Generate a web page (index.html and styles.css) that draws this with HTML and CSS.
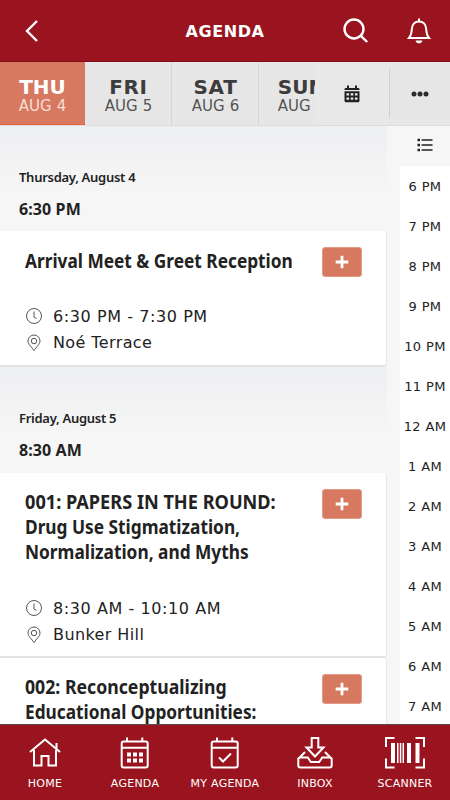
FILE: index.html
```html
<!DOCTYPE html>
<html lang="en">
<head>
<meta charset="utf-8">
<title>Agenda</title>
<link rel="stylesheet" href="styles.css">
</head>
<body>
<div class="app">
  <header class="topbar">
    <svg class="back" width="20" height="26" viewBox="0 0 20 26"><path d="M16 3 6 13l10 10"/></svg>
    <h1>AGENDA</h1>
    <svg class="search" width="28" height="28" viewBox="0 0 28 28"><circle cx="12" cy="12" r="9.500"/><path d="m18.800 18.800 6.400 6.200"/></svg>
    <svg class="bell" width="26" height="28" viewBox="0 0 26 28"><path d="M13 1.500v3M3 21h20c-2.600-3-2.600-5-2.800-9C20 7.300 17 4.500 13 4.500S6 7.300 5.800 12c-.2 4-.2 6-2.800 9z"/><path class="solid" d="M9.500 23.500h7c-.7 2.100-1.700 2.800-3.500 2.800s-2.800-.7-3.500-2.800z"/></svg>
  </header>
  <nav class="daybar">
    <div class="days">
      <div class="day active"><b>THU</b><span>AUG 4</span></div>
      <div class="day"><b class="wide">FRI</b><span>AUG 5</span></div>
      <div class="day"><b class="wide">SAT</b><span>AUG 6</span></div>
      <div class="day last"><b>SUN</b><span>AUG 7</span></div>
    </div>
    <div class="pick"><svg width="16" height="18" viewBox="0 0 16 18"><path d="M.5 5V4.200Q.5 3 1.700 3H3V.5h2V3h6V.5h2V3h1.300q1.200 0 1.200 1.200V5zM.5 6.300h15v9.500q0 1.500-1.500 1.500H2Q.5 17.300.5 15.800z"/><path class="holes" d="M2.500 8.300h2.600v2.300H2.500zm4.200 0h2.600v2.300H6.700zm4.200 0h2.600v2.300h-2.600zM2.500 12.500h2.600v2.300H2.500zm4.200 0h2.600v2.300H6.700zm4.200 0h2.600v2.300h-2.600z"/></svg></div>
    <div class="more"><svg width="18" height="6" viewBox="0 0 18 6"><circle cx="3" cy="3" r="2.500"/><circle cx="9" cy="3" r="2.500"/><circle cx="15" cy="3" r="2.500"/></svg></div>
  </nav>
  <div class="body">
    <main class="list">
      <section>
        <div class="when"><p class="date">Thursday, August 4</p><p class="hour">6:30 PM</p></div>
        <article class="card first">
          <div class="head"><h2><span>Arrival Meet &amp; Greet Reception</span></h2><button class="add"><svg width="14" height="14" viewBox="0 0 14 14"><path d="M7 .7v12.600M.7 7h12.600"/></svg></button></div>
          <div class="info"><svg width="18" height="18" viewBox="0 0 18 18"><circle cx="9" cy="9" r="7.500"/><path d="M9 4.500V10l2.500 1.500"/></svg><span>6:30 PM - 7:30 PM</span></div>
          <div class="info"><svg width="18" height="18" viewBox="0 0 18 18"><path d="M9 16.700C7 13 3 10.500 3 7a6 6 0 0 1 12 0c0 3.500-4 6-6 9.700z"/><circle cx="9" cy="7" r="2.700"/></svg><span class="place">Noé Terrace</span></div>
        </article>
      </section>
      <section>
        <div class="when second"><p class="date">Friday, August 5</p><p class="hour">8:30 AM</p></div>
        <article class="card tall">
          <div class="head"><h2><span class="caps">001: PAPERS IN THE ROUND:</span><span>Drug Use Stigmatization,</span><span>Normalization, and Myths</span></h2><button class="add"><svg width="14" height="14" viewBox="0 0 14 14"><path d="M7 .7v12.600M.7 7h12.600"/></svg></button></div>
          <div class="info"><svg width="18" height="18" viewBox="0 0 18 18"><circle cx="9" cy="9" r="7.500"/><path d="M9 4.500V10l2.500 1.500"/></svg><span>8:30 AM - 10:10 AM</span></div>
          <div class="info"><svg width="18" height="18" viewBox="0 0 18 18"><path d="M9 16.700C7 13 3 10.500 3 7a6 6 0 0 1 12 0c0 3.500-4 6-6 9.700z"/><circle cx="9" cy="7" r="2.700"/></svg><span class="place">Bunker Hill</span></div>
        </article>
        <article class="card tall">
          <div class="head"><h2><span class="semi">002: Reconceptualizing</span><span>Educational Opportunities:</span></h2><button class="add"><svg width="14" height="14" viewBox="0 0 14 14"><path d="M7 .7v12.600M.7 7h12.600"/></svg></button></div>
        </article>
      </section>
    </main>
    <aside class="rail">
      <div class="railtop"><svg width="16" height="14" viewBox="0 0 16 14"><path d="M4.500 2H15.500M4.500 7H15.500M4.500 12H15.500"/><path class="dots" d="M.5 2H3M.5 7H3M.5 12H3"/></svg></div>
      <div class="hours">
        <span>6 PM</span><span>7 PM</span><span>8 PM</span><span>9 PM</span><span>10 PM</span><span>11 PM</span><span>12 AM</span><span>1 AM</span><span>2 AM</span><span>3 AM</span><span>4 AM</span><span>5 AM</span><span>6 AM</span><span>7 AM</span>
      </div>
    </aside>
  </div>
  <footer class="tabs">
    <div class="tab"><svg width="42" height="34" viewBox="0 0 42 34"><path d="m6 16 15-12.500L36 16M10 14v15.500h7.500V20h7v9.500H32V14M32.500 13V7"/></svg><span>HOME</span></div>
    <div class="tab"><svg width="42" height="34" viewBox="0 0 42 34"><rect x="7.700" y="5.500" width="26" height="26" rx="2"/><path d="M7.700 11.700h26M13 1.500v4M28.300 1.500v4"/><path class="grid" d="M13 16.500h4v4h-4zm6 0h4v4h-4zm6 0h4v4h-4zm-12 6h4v4h-4zm6 0h4v4h-4zm6 0h4v4h-4z"/></svg><span>AGENDA</span></div>
    <div class="tab"><svg width="42" height="34" viewBox="0 0 42 34"><rect x="7.700" y="5.500" width="26" height="26" rx="2"/><path d="M7.700 11.700h26M13 1.500v4M28.300 1.500v4"/><path d="m15 21.500 4 4 8-8"/></svg><span>MY AGENDA</span></div>
    <div class="tab"><svg width="42" height="34" viewBox="0 0 42 34"><path d="M17.700 2h6.600v9.500h5.200L21 20.500l-8.500-9h5.200zM11 16l-6.700 7v6.500q0 2 2 2h29.400q2 0 2-2V23L31 16M4.300 23q0-1.500 2-1.500h7.500l3 4.500h8.400l3-4.500h7.500q2 0 2 1.500"/></svg><span>INBOX</span></div>
    <div class="tab"><svg width="42" height="34" viewBox="0 0 42 34"><path d="M10.500 2H2v9M31.500 2H40v9M2 22.500v9h8.500M40 22.500v9h-8.500"/><path class="grid" d="M7 7h4v20H7zm6 0h1.500v20H13zm2.800 0h1.500v20h-1.500zm2.700 0h1.500v20h-1.500zM23 7h4v20h-4zm8.500 0h4v20h-4z"/></svg><span>SCANNER</span></div>
  </footer>
</div>
</body>
</html>
```
FILE: styles.css
```css
* { box-sizing: border-box; }
body { margin: 0; font-family: "DejaVu Sans", Verdana, sans-serif; color: #222; }
p, h1, h2 { margin: 0; }
svg { display: block; flex: none; fill: none; }
.app { width: 450px; height: 800px; display: flex; flex-direction: column; overflow: hidden; background: #f6f6f6; }
.topbar { height: 62px; flex: none; display: grid; grid-template-columns: 150px 150px 88px 62px; align-items: center; background: #99141e; border-bottom: 1px solid #850f18; color: #fff; }
.topbar svg { stroke: #fff; stroke-width: 2.400; }
.back { margin-left: 21px; }
.search { margin-left: 42px; }
.bell { margin-left: 18px; }
.topbar .bell { stroke-width: 2; }
.topbar .solid { fill: #fff; stroke: none; }
h1 { font-size: 16px; line-height: 20px; text-align: center; letter-spacing: .6px; padding-top: 3px; }
.daybar { height: 64px; flex: none; display: flex; background: #e6e6e6; border-bottom: 1px solid #dcdddd; }
.days { width: 315px; flex: none; display: flex; overflow: hidden; }
.day { width: 87px; flex: none; border-right: 1px solid #d6d6d6; display: flex; flex-direction: column; align-items: center; padding: 13px 0 0 1px; color: #3c3c3c; }
.day.active { width: 85px; padding-left: 0; background: #d77860; color: #fff; border: 0; border-bottom: 1px solid #e16330; }
.day.last { padding-left: 0; width: 86px; }
.day b { font-size: 20px; line-height: 24px; }
.day .wide { letter-spacing: .6px; }
.day span { font-size: 15px; line-height: 18px; margin-top: -2px; letter-spacing: .1px; color: #555; white-space: nowrap; }
.day.active span { color: #f9dcd3; }
.pick { width: 74px; display: flex; align-items: center; justify-content: center; background: #e8e8e8; }
.pick svg { fill: #222; }
.pick .holes { fill: #e8e8e8; }
.more { flex: 1; display: flex; align-items: center; justify-content: center; margin: 7px 0; border-left: 1px solid #d2d2d2; }
.more svg { fill: #2c2c2c; }
.body { height: 598px; flex: none; display: flex; overflow: hidden; }
.list { width: 387px; flex: none; height: 598px; overflow: hidden; }
.when { height: 105px; padding: 42px 19px 0; background: linear-gradient(#eeeff1, #f6f6f6 65%); font-family: "Noto Sans", sans-serif; font-weight: 600; }
.when.second { height: 106px; }
.date { font-size: 13px; line-height: 18px; letter-spacing: -.28px; }
.hour { font-size: 16px; line-height: 20px; margin-top: 13px; font-weight: 700; letter-spacing: .1px; }
.card { width: 387px; background: #fff; border-right: 1px solid #e6e6e6; border-bottom: 2px solid #e2e3e4; border-radius: 0 3px 4px 0; padding: 16px 24px 0 25px; }
.card.first { height: 136px; }
.card.tall { height: 185px; }
.head { display: flex; justify-content: space-between; height: 56px; }
.tall .head { height: 106px; }
h2 { flex: 1; min-width: 0; padding-top: 1px; font-family: "Noto Sans", sans-serif; font-weight: 700; font-size: 20px; line-height: 25px; white-space: nowrap; }
.tall h2 { padding-top: 0; }
h2 span { display: block; width: max-content; transform: scaleX(.864); transform-origin: left; }
h2 .caps { transform: scaleX(.907); }
h2 .semi { transform: scaleX(.884); }
.add { width: 40px; height: 30px; margin-left: -60px; flex: none; padding: 0; border: 1px solid #e59a88; border-radius: 3px; background: #d77860; display: flex; align-items: center; justify-content: center; }
.add svg { stroke: #fff; stroke-width: 2.800; }
.info { height: 26.500px; display: flex; align-items: center; gap: 10px; font-size: 16px; letter-spacing: .58px; white-space: nowrap; }
.place { letter-spacing: .4px; }
.info svg { stroke: #555; stroke-width: 1; }
.rail { width: 50px; margin-left: 13px; flex: none; }
.railtop { height: 40px; display: flex; align-items: center; justify-content: center; padding-bottom: 3px; }
.railtop svg { stroke: #222; stroke-width: 1.400; }
.railtop .dots { stroke-width: 2.600; }
.hours { background: #fff; }
.hours span { height: 40px; display: flex; align-items: center; justify-content: center; font-size: 13px; letter-spacing: .35px; white-space: nowrap; }
.tabs { height: 76px; flex: none; display: grid; grid-template-columns: repeat(5, 1fr); background: #99141e; border-top: 1px solid #60494d; color: #fff; }
.tab { display: flex; flex-direction: column; align-items: center; padding-top: 11px; }
.tab svg { stroke: #fff; stroke-width: 2; }
.tab .grid { fill: #fff; stroke: none; }
.tab span { font-size: 11px; line-height: 14px; letter-spacing: .25px; margin-top: 7px; white-space: nowrap; }
```
